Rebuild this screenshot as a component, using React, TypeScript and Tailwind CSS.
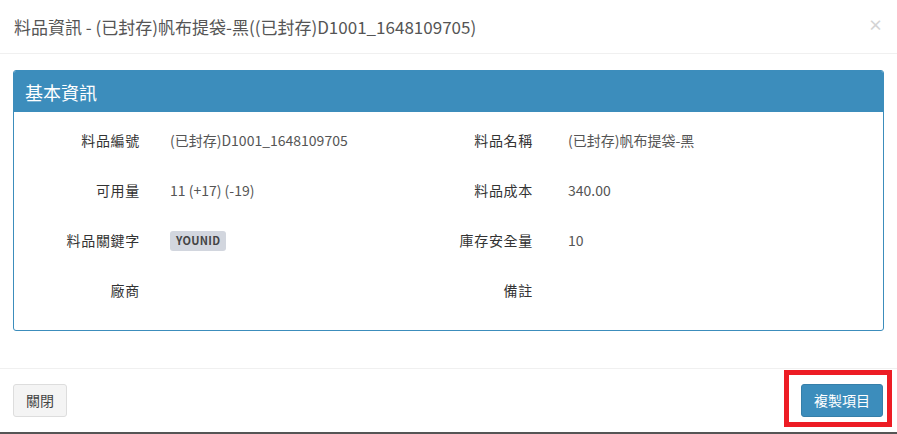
import React from 'react';

const rows: { l1: string; v1: React.ReactNode; l2: string; v2: React.ReactNode }[] = [
    { l1: '料品編號', v1: '(已封存)D1001_1648109705', l2: '料品名稱', v2: '(已封存)帆布提袋-黑' },
    { l1: '可用量', v1: '11 (+17) (-19)', l2: '料品成本', v2: '340.00' },
    {
        l1: '料品關鍵字',
        v1: (
            <span className="inline-flex items-center h-[20px] px-[6px] rounded-[3px] bg-[#d2d6de] text-[#444] text-[11px] font-bold tracking-[0.3px]">
                YOUNID
            </span>
        ),
        l2: '庫存安全量',
        v2: '10',
    },
    { l1: '廠商', v1: '', l2: '備註', v2: '' },
];

export default function App() {
    return (
        <div
            className="w-[897px] h-[434px] bg-white flex flex-col overflow-hidden"
            style={{ fontFamily: '"Noto Sans CJK TC", "Noto Sans", sans-serif' }}
        >
            {/* Header */}
            <div className="h-[54px] shrink-0 border-b border-[#f0f0f0] flex items-center justify-between pl-[14px] pr-[14px]">
                <h4 className="text-[17px] text-[#555] leading-none">
                    料品資訊 - (已封存)帆布提袋-黑((已封存)D1001_1648109705)
                </h4>
                <span className="text-[15px] font-bold text-[#d4d4d4] leading-none -mt-[4px]">×</span>
            </div>

            {/* Body */}
            <div className="pt-[16px] pb-[37px] px-[13px] shrink-0">
                <div className="border border-[#3c8dbc] rounded-[3px] overflow-hidden">
                    <div className="h-[41px] bg-[#3c8dbc] flex items-center px-[11px]">
                        <h3 className="text-[18px] text-white leading-none">基本資訊</h3>
                    </div>
                    <div className="pt-[3px] pb-[15px]">
                        {rows.map((r) => (
                            <div key={r.l1} className="h-[50px] flex items-center">
                                <div className="w-[126px] text-right text-[14px] tracking-[0.7px] text-[#333]">{r.l1}</div>
                                <div className="ml-[30px] w-[248px] text-[14px] text-[#555]">{r.v1}</div>
                                <div className="w-[115px] text-right text-[14px] tracking-[0.7px] text-[#333]">{r.l2}</div>
                                <div className="ml-[35px] flex-1 text-[14px] text-[#555]">{r.v2}</div>
                            </div>
                        ))}
                    </div>
                </div>
            </div>

            {/* Footer */}
            <div className="h-[64px] shrink-0 border-t border-[#f0f0f0] flex items-start justify-between pt-[15px] pl-[13px] pr-[14px]">
                <button className="h-[33px] w-[54px] bg-[#f4f4f4] border border-[#ddd] rounded-[3px] text-[14px] text-[#444]">
                    關閉
                </button>
                <div className="relative">
                    <button className="h-[33px] w-[82px] bg-[#3c8dbc] border border-[#367fa9] rounded-[3px] text-[14px] text-white">
                        複製項目
                    </button>
                    <div className="absolute left-[-17px] top-[-14px] w-[108px] h-[57px] border-[5px] border-[#ed1c24] pointer-events-none" />
                </div>
            </div>
            <div className="h-[2px] bg-[#555] shrink-0" />
        </div>
    );
}
